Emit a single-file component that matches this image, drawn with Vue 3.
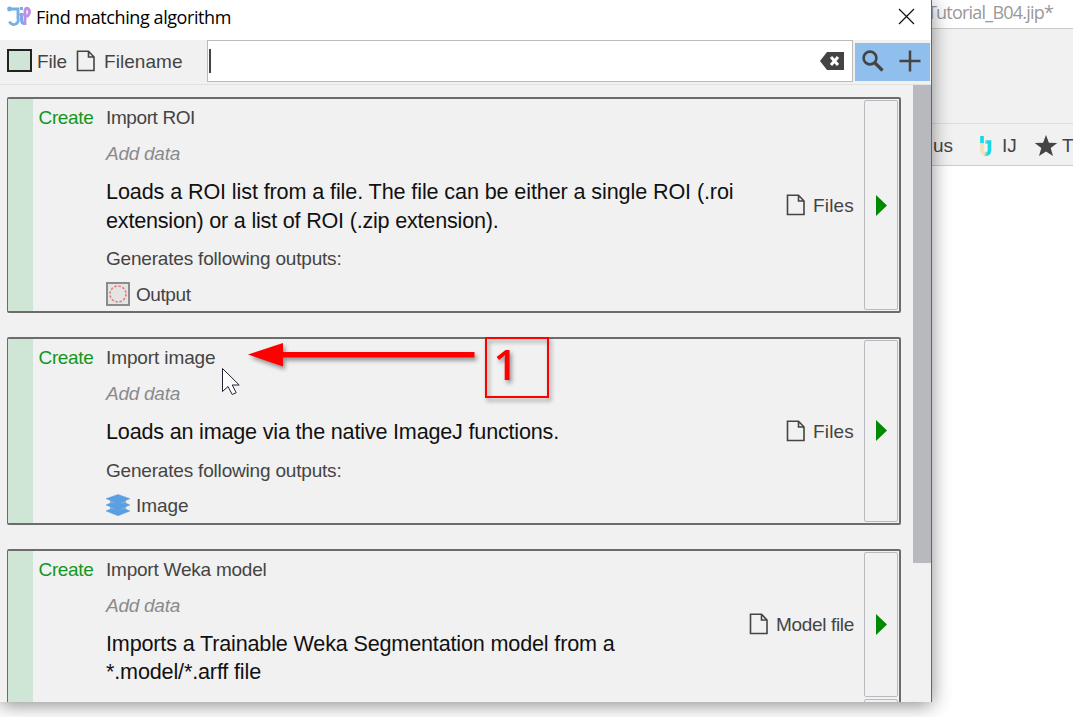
<script setup>
const cards = [
  { title: 'Import ROI', tw: 89, lines: [['Loads a ROI list from a file. The file can be either a single ROI (.roi', 627.5], ['extension) or a list of ROI (.zip extension).', 392.5]], input: 'Files', iw: 41, output: 'Output', ow: 54.5 },
  { title: 'Import image', tw: 109.5, lines: [['Loads an image via the native ImageJ functions.', 453]], input: 'Files', iw: 41, output: 'Image', ow: 52.5 },
  { title: 'Import Weka model', tw: 160.5, lines: [['Imports a Trainable Weka Segmentation model from a', 508.5], ['*.model/*.arff file', 155]], input: 'Model file', iw: 78, split: true }
]

// Spread the letters so that a label takes the given width
const vFit = {
  mounted(el, { value }) {
    const w = el.getBoundingClientRect().width
    el.style.letterSpacing = (value - w) / el.textContent.length + 'px'
  }
}
</script>

<template>
  <div class="desktop">
    <div class="back">
      <div class="back-title"><span v-fit="126">Tutorial_B04.jip*</span></div>
      <div class="back-ribbon"></div>
      <div class="back-tabs">
        <span class="us">us</span>
        <svg class="ij" width="14" height="22" viewBox="0 0 14 22">
          <defs><linearGradient id="g" x1="0" y1="0" x2="1" y2="0"><stop offset="0" stop-color="#f8dfae" /><stop offset=".65" stop-color="#18d8e5" /></linearGradient></defs>
          <path d="M3 1v8" stroke="#18d8e5" stroke-width="3.6" fill="none" />
          <path d="M3 8v7Q3 18 6 18.500" stroke="#f5dfb4" stroke-width="3.600" fill="none" />
          <path d="M6 7H10.500V15Q10.500 19.500 5 19.500" stroke="url(#g)" stroke-width="3.600" fill="none" />
        </svg>
        <span class="ijt">IJ</span>
        <svg class="star" width="24" height="24" viewBox="0 0 24 24"><path fill="#444" d="M12 1l2.900 7.700 8.400.3-6.600 5.100 2.300 8L12 17.500 5 22.100l2.300-8L.7 9l8.400-.3z" /></svg>
        <span>T</span>
      </div>
    </div>

    <div class="dialog">
      <header class="titlebar">
        <svg class="logo" width="24" height="20" viewBox="0 0 24 20" fill="none" stroke-width="2.900">
          <path d="M2 3h9v9.500a4 4 0 0 1-8.500 3" stroke="#72b0e7" />
          <path d="M14.500 1v3M14.500 7v7q0 3.500 3 3.500" stroke="#7aa8e8" />
          <path d="M11 8.500h6" stroke="#86a9e8" stroke-width="2" />
          <path d="M18 19V4.500Q18.500 1.500 21 2.500Q24 6 21 9.500L18 11" stroke="#bd8fe5" />
          <circle cx="2.500" cy="3" r="2.400" fill="#72b0e7" />
        </svg>
        <span v-fit="195">Find matching algorithm</span>
        <svg class="close" width="17" height="17" viewBox="0 0 17 17"><path d="M1 1l15 15M16 1L1 16" stroke="#111" stroke-width="1.200" /></svg>
      </header>

      <div class="toolbar">
        <i class="swatch"></i><span v-fit="30" class="file">File</span>
        <svg class="doc" width="20" height="22" viewBox="0 0 20 22"><path d="M1.500 1.200h11L18 7v13.500H1.500zM12.500 1.200V7H18" fill="none" stroke="#444" stroke-width="1.600" /></svg>
        <span v-fit="78.500">Filename</span>
        <div class="search">
          <i class="caret"></i>
          <svg width="24" height="18" viewBox="0 0 24 18"><path d="M7 0h17v18H7L0 9z" fill="#444" /><path d="M11 5l7 8M18 5l-7 8" stroke="#fff" stroke-width="3" /></svg>
        </div>
        <div class="tools">
          <svg width="22" height="22" viewBox="0 0 22 22" fill="none" stroke="#444"><circle cx="8" cy="8" r="6.400" stroke-width="2.600" /><path d="M12.500 12.500l8 8" stroke-width="3.200" /></svg>
          <svg width="22" height="22" viewBox="0 0 22 22"><path d="M11 .5v21M.5 11h21" stroke="#444" stroke-width="2.500" /></svg>
        </div>
      </div>

      <div class="body">
        <div class="list">
          <section v-for="c in cards" :key="c.title" class="card">
            <div class="stripe"></div>
            <div class="create"><span v-fit="55">Create</span></div>
            <div class="info">
              <div class="row"><span v-fit="c.tw">{{ c.title }}</span></div>
              <div class="row hint"><span v-fit="74">Add data</span></div>
              <div class="desc"><div v-for="l in c.lines" :key="l[0]"><span v-fit="l[1]">{{ l[0] }}</span></div></div>
              <template v-if="c.output">
                <div class="row"><span v-fit="235.500">Generates following outputs:</span></div>
                <div class="row out">
                  <svg v-if="c.output === 'Output'" width="24" height="24" viewBox="0 0 24 24"><rect x="1" y="1" width="22" height="22" fill="#e4e4e4" stroke="#8c8c8c" stroke-width="2" /><circle cx="12" cy="12" r="8" fill="none" stroke="#e88080" stroke-width="1.600" stroke-dasharray="2.600 1.600" /></svg>
                  <svg v-else width="24" height="22" viewBox="0 0 24 22" fill="#5a9fe2" stroke="#4a8fd4" stroke-width=".4"><path d="M0 17l4-1.800h16l4 1.800-12 4.700z" /><path d="M0 11l4-1.800h16l4 1.800-12 4.700z" /><path d="M12 .5l12 4.200-12 4.700L0 4.700z" /><path d="M4 6h16v11l-8 3-8-3z" stroke="none" opacity=".75" /></svg>
                  <span v-fit="c.ow">{{ c.output }}</span>
                </div>
              </template>
            </div>
            <div class="slots">
              <div v-for="n in c.split ? 2 : 1" :key="n" class="slot" :class="{ fixed: c.split }">
                <template v-if="n === 1">
                  <svg class="sdoc" width="20" height="22" viewBox="0 0 20 22"><path d="M1.500 1.200h11L18 7v13.500H1.500zM12.500 1.200V7H18" fill="none" stroke="#444" stroke-width="1.600" /></svg>
                  <span class="input" v-fit="c.iw">{{ c.input }}</span>
                </template>
                <div class="run"><svg v-if="n === 1" width="11" height="21" viewBox="0 0 11 21"><path d="M0 0l11 10.500L0 21z" fill="#008a00" /></svg></div>
              </div>
            </div>
          </section>
        </div>
        <div class="thumb"></div>
      </div>
    </div>

    <svg class="marks" width="1073" height="717" viewBox="0 0 1073 717">
      <g class="shade">
        <path d="M248 354.500L283 343v9h191.500v5.500H283v9z" fill="#f00" />
        <rect x="486" y="338" width="62" height="59" fill="none" stroke="#f00" stroke-width="2" />
        <text x="493.500" y="379.500" class="one">1</text>
      </g>
      <path d="M222.500 368.500v23l5.500-5 4.200 8 4-1.800-4-7.700h7z" fill="#fff" stroke="#223" stroke-width="1" />
    </svg>
  </div>
</template>

<style>
body { margin: 0; overflow: hidden; }
</style>

<style scoped>
.desktop { position: relative; width: 1073px; height: 717px; overflow: hidden; background: #fff; font: 19px/36px "Liberation Sans", Arial, sans-serif; color: #444; white-space: nowrap; }
.desktop span { display: inline-block; white-space: pre; }
.back { position: absolute; left: 927px; top: 0; width: 146px; }
.back-title { height: 28px; border-bottom: 1px solid #ccc; font: 18px/24px "Open Sans", "Noto Sans", sans-serif; color: #999; }
.back-ribbon { height: 94px; background: #f1f1f1; border-bottom: 1px solid #ddd; }
.back-tabs { height: 41px; background: #f1f1f1; border-bottom: 1px solid #ccc; display: flex; align-items: center; line-height: 41px; padding-top: 2px; box-sizing: border-box; height: 42px; }
.us { margin-left: 6px; width: 46px; flex: none; }
.ij { width: 14px; margin-right: 9px; flex: none; }
.ijt { width: 32px; flex: none; }
.star { margin-right: 4px; flex: none; }
.dialog { position: absolute; left: 0; top: 0; width: 931px; height: 702px; border-right: 1px solid #666; background: #f1f1f1; box-shadow: 0 3px 18px rgba(0, 0, 0, .46); overflow: hidden; display: flex; flex-direction: column; }
.titlebar { height: 40px; flex: none; background: #fff; display: flex; font: 18px/35px "Open Sans", "Noto Sans", sans-serif; color: #000; }
.logo { margin: 6px 5px 0 7px; }
.close { margin: 8px 16px 0 auto; }
.toolbar { height: 45px; flex: none; box-sizing: border-box; border-bottom: 1px solid #e2e2e2; display: flex; align-items: center; padding: 0 1px 2px 7px; }
.toolbar span { position: relative; top: 1px; }
.swatch { box-sizing: border-box; width: 25px; height: 23px; margin-right: 5px; border: 2px solid #222; background: #cfe5d5; position: relative; top: -1px; }
.file { margin-right: 9px; }
.doc { margin-right: 8px; }
.search { margin-left: auto; box-sizing: border-box; width: 646px; height: 42px; background: #fff; border: 1px solid #bbb; display: flex; align-items: center; justify-content: space-between; padding: 0 8px 0 1px; }
.caret { width: 2px; height: 24px; background: #444; }
.tools { width: 75px; height: 38px; margin: 1px 0 0 2px; background: #90bfee; display: flex; align-items: center; justify-content: space-between; box-sizing: border-box; padding: 0 9px 1px 7px; }
.body { flex: 1; min-height: 0; display: flex; justify-content: space-between; }
.list { width: 895px; margin: 12px 0 0 7px; display: flex; flex-direction: column; gap: 24px; }
.card { flex: none; box-sizing: border-box; width: 894px; border: 2px solid #6c6c6c; border-left-width: 1px; border-radius: 2px; display: flex; min-height: 187.500px; }
.card:last-child { height: 220px; }
.stripe { width: 25px; background: #cfe5d5; }
.create { width: 67.500px; padding-left: 5.500px; color: #14961e; line-height: 37px; }
.info { flex: 1; min-width: 0; margin-bottom: -1px; }
.row { height: 36px; line-height: 37px; }
.hint { font-style: italic; color: #8a8a8a; }
.desc { margin: 7px 0 5px; font-size: 21.600px; line-height: 28.500px; color: #111; }
.out { display: flex; align-items: center; gap: 6px; }
.out svg { margin-top: -1px; }
.slots { display: flex; flex-direction: column; }
.slot { flex: 1; display: flex; align-items: center; justify-content: flex-end; padding: 1px 1px 1px 0; }
.slot.fixed { flex: none; height: 145px; }
.input { position: relative; top: 1px; }
.sdoc { margin-right: 7px; }
.run { align-self: stretch; width: 34px; margin-left: 10px; box-sizing: border-box; border: 1px solid #b9b9c0; border-radius: 2px; display: flex; align-items: center; justify-content: center; }
.thumb { width: 18px; height: 478px; background: #b8b9bf; }
.marks { position: absolute; left: 0; top: 0; }
.shade { filter: drop-shadow(2px 3px 2px rgba(0, 0, 0, .4)); }
.one { font: 600 42px "Open Sans", "Noto Sans", sans-serif; fill: #f00; }
</style>
